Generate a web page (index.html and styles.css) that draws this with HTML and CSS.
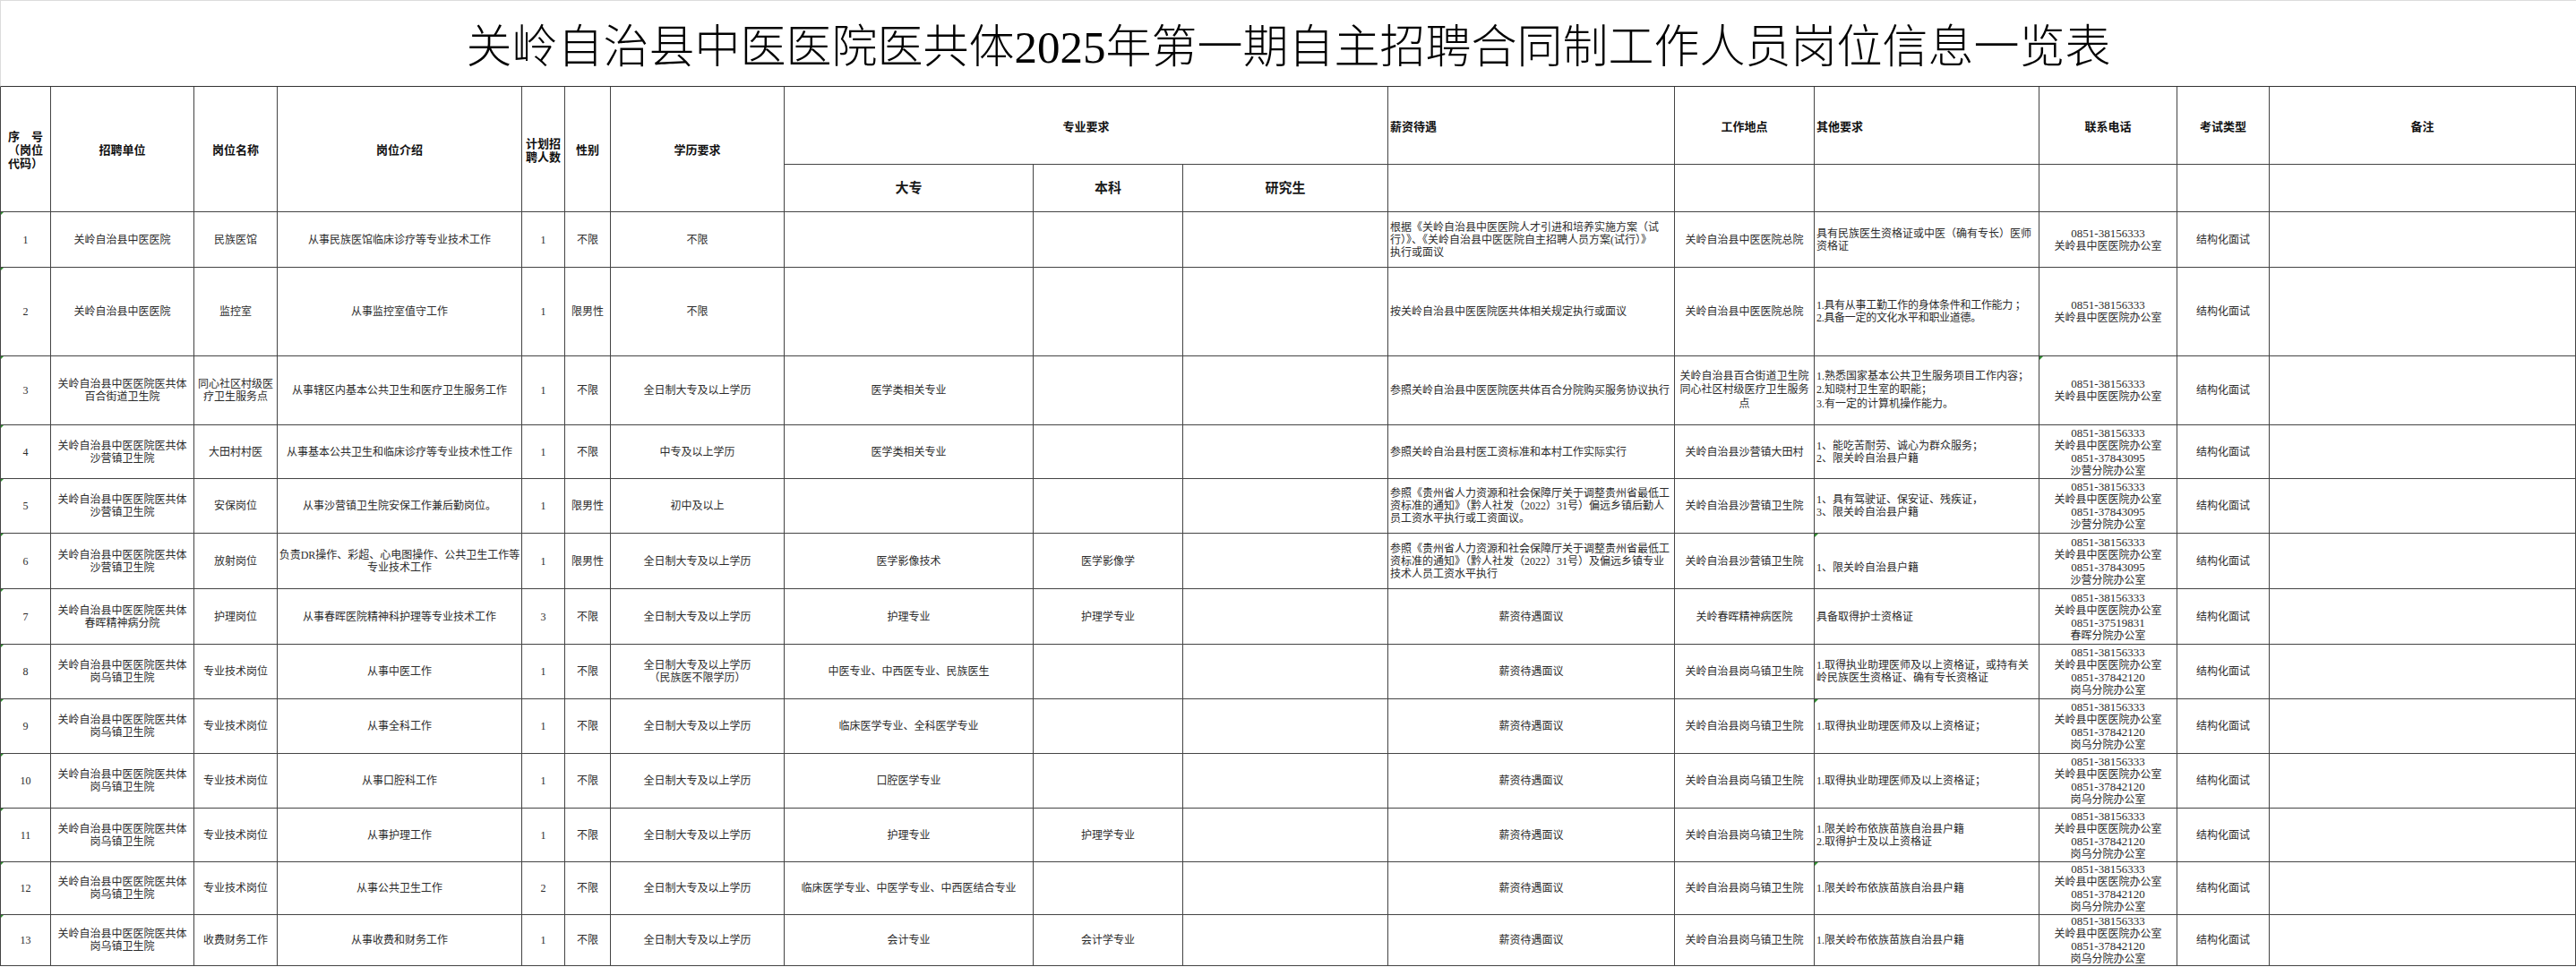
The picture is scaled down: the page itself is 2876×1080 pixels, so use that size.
FILE: index.html
```html
<!DOCTYPE html>
<html lang="zh-CN">
<head>
<meta charset="utf-8">
<title>岗位信息一览表</title>
<link rel="stylesheet" href="styles.css">
</head>
<body>
<div class="sheet">
  <div class="c title"><p>关岭自治县中医医院医共体2025年第一期自主招聘合同制工作人员岗位信息一览表</p></div>

  <div class="c h no r2"><p>序　号<br>（岗位<br>代码）</p></div>
  <div class="c h r2"><p>招聘单位</p></div>
  <div class="c h r2"><p>岗位名称</p></div>
  <div class="c h r2"><p>岗位介绍</p></div>
  <div class="c h r2"><p>计划招<br>聘人数</p></div>
  <div class="c h r2"><p>性别</p></div>
  <div class="c h r2"><p>学历要求</p></div>
  <div class="c h c3"><p>专业要求</p></div>
  <div class="c h l"><p>薪资待遇</p></div>
  <div class="c h"><p>工作地点</p></div>
  <div class="c h l"><p>其他要求</p></div>
  <div class="c h"><p>联系电话</p></div>
  <div class="c h"><p>考试类型</p></div>
  <div class="c h"><p>备注</p></div>
  <div class="c h2"><p>大专</p></div>
  <div class="c h2"><p>本科</p></div>
  <div class="c h2"><p>研究生</p></div>
  <div class="c"></div><div class="c"></div><div class="c"></div><div class="c"></div><div class="c"></div><div class="c"></div>

  <!-- 1 -->
  <div class="c no tri"><p>1</p></div>
  <div class="c"><p>关岭自治县中医医院</p></div>
  <div class="c"><p>民族医馆</p></div>
  <div class="c"><p>从事民族医馆临床诊疗等专业技术工作</p></div>
  <div class="c"><p>1</p></div>
  <div class="c"><p>不限</p></div>
  <div class="c"><p>不限</p></div>
  <div class="c"></div><div class="c"></div><div class="c"></div>
  <div class="c l"><p>根据《关岭自治县中医医院人才引进和培养实施方案（试<br>行）》、《关岭自治县中医医院自主招聘人员方案(试行）》<br>执行或面议</p></div>
  <div class="c"><p>关岭自治县中医医院总院</p></div>
  <div class="c l"><p>具有民族医生资格证或中医（确有专长）医师<br>资格证</p></div>
  <div class="c"><p><span class="num">0851-38156333</span><br>关岭县中医医院办公室</p></div>
  <div class="c"><p>结构化面试</p></div>
  <div class="c"></div>

  <!-- 2 -->
  <div class="c no tri"><p>2</p></div>
  <div class="c"><p>关岭自治县中医医院</p></div>
  <div class="c"><p>监控室</p></div>
  <div class="c"><p>从事监控室值守工作</p></div>
  <div class="c"><p>1</p></div>
  <div class="c"><p>限男性</p></div>
  <div class="c"><p>不限</p></div>
  <div class="c"></div><div class="c"></div><div class="c"></div>
  <div class="c l"><p>按关岭自治县中医医院医共体相关规定执行或面议</p></div>
  <div class="c"><p>关岭自治县中医医院总院</p></div>
  <div class="c l tight"><p>1.具有从事工勤工作的身体条件和工作能力 ；<br>2.具备一定的文化水平和职业道德。</p></div>
  <div class="c"><p><span class="num">0851-38156333</span><br>关岭县中医医院办公室</p></div>
  <div class="c"><p>结构化面试</p></div>
  <div class="c"></div>

  <!-- 3 -->
  <div class="c no tri"><p>3</p></div>
  <div class="c"><p>关岭自治县中医医院医共体<br>百合街道卫生院</p></div>
  <div class="c"><p>同心社区村级医<br>疗卫生服务点</p></div>
  <div class="c"><p>从事辖区内基本公共卫生和医疗卫生服务工作</p></div>
  <div class="c"><p>1</p></div>
  <div class="c"><p>不限</p></div>
  <div class="c"><p>全日制大专及以上学历</p></div>
  <div class="c"><p>医学类相关专业</p></div>
  <div class="c"></div><div class="c"></div>
  <div class="c l"><p>参照关岭自治县中医医院医共体百合分院购买服务协议执行</p></div>
  <div class="c loose"><p>关岭自治县百合街道卫生院<br>同心社区村级医疗卫生服务<br>点</p></div>
  <div class="c l loose"><p>1.熟悉国家基本公共卫生服务项目工作内容；<br>2.知晓村卫生室的职能；<br>3.有一定的计算机操作能力。</p></div>
  <div class="c tri"><p><span class="num">0851-38156333</span><br>关岭县中医医院办公室</p></div>
  <div class="c"><p>结构化面试</p></div>
  <div class="c"></div>

  <!-- 4 -->
  <div class="c no tri"><p>4</p></div>
  <div class="c"><p>关岭自治县中医医院医共体<br>沙营镇卫生院</p></div>
  <div class="c"><p>大田村村医</p></div>
  <div class="c"><p>从事基本公共卫生和临床诊疗等专业技术性工作</p></div>
  <div class="c"><p>1</p></div>
  <div class="c"><p>不限</p></div>
  <div class="c"><p>中专及以上学历</p></div>
  <div class="c"><p>医学类相关专业</p></div>
  <div class="c"></div><div class="c"></div>
  <div class="c l"><p>参照关岭自治县村医工资标准和本村工作实际实行</p></div>
  <div class="c"><p>关岭自治县沙营镇大田村</p></div>
  <div class="c l"><p>1、能吃苦耐劳、诚心为群众服务；<br>2、限关岭自治县户籍</p></div>
  <div class="c"><p><span class="num">0851-38156333</span><br>关岭县中医医院办公室<br><span class="num">0851-37843095</span><br>沙营分院办公室</p></div>
  <div class="c"><p>结构化面试</p></div>
  <div class="c"></div>

  <!-- 5 -->
  <div class="c no tri"><p>5</p></div>
  <div class="c"><p>关岭自治县中医医院医共体<br>沙营镇卫生院</p></div>
  <div class="c"><p>安保岗位</p></div>
  <div class="c"><p>从事沙营镇卫生院安保工作兼后勤岗位。</p></div>
  <div class="c"><p>1</p></div>
  <div class="c"><p>限男性</p></div>
  <div class="c"><p>初中及以上</p></div>
  <div class="c"></div><div class="c"></div><div class="c"></div>
  <div class="c l"><p>参照《贵州省人力资源和社会保障厅关于调整贵州省最低工<br>资标准的通知》（黔人社发（2022）31号）偏远乡镇后勤人<br>员工资水平执行或工资面议。</p></div>
  <div class="c"><p>关岭自治县沙营镇卫生院</p></div>
  <div class="c l"><p>1、具有驾驶证、保安证、残疾证，<br>3、限关岭自治县户籍</p></div>
  <div class="c"><p><span class="num">0851-38156333</span><br>关岭县中医医院办公室<br><span class="num">0851-37843095</span><br>沙营分院办公室</p></div>
  <div class="c"><p>结构化面试</p></div>
  <div class="c"></div>

  <!-- 6 -->
  <div class="c no tri"><p>6</p></div>
  <div class="c"><p>关岭自治县中医医院医共体<br>沙营镇卫生院</p></div>
  <div class="c"><p>放射岗位</p></div>
  <div class="c"><p>负责DR操作、彩超、心电图操作、公共卫生工作等<br>专业技术工作</p></div>
  <div class="c"><p>1</p></div>
  <div class="c"><p>限男性</p></div>
  <div class="c"><p>全日制大专及以上学历</p></div>
  <div class="c"><p>医学影像技术</p></div>
  <div class="c"><p>医学影像学</p></div>
  <div class="c"></div>
  <div class="c l"><p>参照《贵州省人力资源和社会保障厅关于调整贵州省最低工<br>资标准的通知》（黔人社发（2022）31号）及偏远乡镇专业<br>技术人员工资水平执行</p></div>
  <div class="c"><p>关岭自治县沙营镇卫生院</p></div>
  <div class="c l tri low"><p>1、限关岭自治县户籍</p></div>
  <div class="c"><p><span class="num">0851-38156333</span><br>关岭县中医医院办公室<br><span class="num">0851-37843095</span><br>沙营分院办公室</p></div>
  <div class="c"><p>结构化面试</p></div>
  <div class="c"></div>

  <!-- 7 -->
  <div class="c no tri"><p>7</p></div>
  <div class="c"><p>关岭自治县中医医院医共体<br>春晖精神病分院</p></div>
  <div class="c"><p>护理岗位</p></div>
  <div class="c"><p>从事春晖医院精神科护理等专业技术工作</p></div>
  <div class="c"><p>3</p></div>
  <div class="c"><p>不限</p></div>
  <div class="c"><p>全日制大专及以上学历</p></div>
  <div class="c"><p>护理专业</p></div>
  <div class="c"><p>护理学专业</p></div>
  <div class="c"></div>
  <div class="c"><p>薪资待遇面议</p></div>
  <div class="c"><p>关岭春晖精神病医院</p></div>
  <div class="c l"><p>具备取得护士资格证</p></div>
  <div class="c"><p><span class="num">0851-38156333</span><br>关岭县中医医院办公室<br><span class="num">0851-37519831</span><br>春晖分院办公室</p></div>
  <div class="c"><p>结构化面试</p></div>
  <div class="c"></div>

  <!-- 8 -->
  <div class="c no tri"><p>8</p></div>
  <div class="c"><p>关岭自治县中医医院医共体<br>岗乌镇卫生院</p></div>
  <div class="c"><p>专业技术岗位</p></div>
  <div class="c"><p>从事中医工作</p></div>
  <div class="c"><p>1</p></div>
  <div class="c"><p>不限</p></div>
  <div class="c"><p>全日制大专及以上学历<br>（民族医不限学历）</p></div>
  <div class="c"><p>中医专业、中西医专业、民族医生</p></div>
  <div class="c"></div><div class="c"></div>
  <div class="c"><p>薪资待遇面议</p></div>
  <div class="c"><p>关岭自治县岗乌镇卫生院</p></div>
  <div class="c l"><p>1.取得执业助理医师及以上资格证，或持有关<br>岭民族医生资格证、确有专长资格证</p></div>
  <div class="c"><p><span class="num">0851-38156333</span><br>关岭县中医医院办公室<br><span class="num">0851-37842120</span><br>岗乌分院办公室</p></div>
  <div class="c"><p>结构化面试</p></div>
  <div class="c"></div>

  <!-- 9 -->
  <div class="c no tri"><p>9</p></div>
  <div class="c"><p>关岭自治县中医医院医共体<br>岗乌镇卫生院</p></div>
  <div class="c"><p>专业技术岗位</p></div>
  <div class="c"><p>从事全科工作</p></div>
  <div class="c"><p>1</p></div>
  <div class="c"><p>不限</p></div>
  <div class="c"><p>全日制大专及以上学历</p></div>
  <div class="c"><p>临床医学专业、全科医学专业</p></div>
  <div class="c"></div><div class="c"></div>
  <div class="c"><p>薪资待遇面议</p></div>
  <div class="c"><p>关岭自治县岗乌镇卫生院</p></div>
  <div class="c l tri"><p>1.取得执业助理医师及以上资格证；</p></div>
  <div class="c"><p><span class="num">0851-38156333</span><br>关岭县中医医院办公室<br><span class="num">0851-37842120</span><br>岗乌分院办公室</p></div>
  <div class="c"><p>结构化面试</p></div>
  <div class="c"></div>

  <!-- 10 -->
  <div class="c no tri"><p>10</p></div>
  <div class="c"><p>关岭自治县中医医院医共体<br>岗乌镇卫生院</p></div>
  <div class="c"><p>专业技术岗位</p></div>
  <div class="c"><p>从事口腔科工作</p></div>
  <div class="c"><p>1</p></div>
  <div class="c"><p>不限</p></div>
  <div class="c"><p>全日制大专及以上学历</p></div>
  <div class="c"><p>口腔医学专业</p></div>
  <div class="c"></div><div class="c"></div>
  <div class="c"><p>薪资待遇面议</p></div>
  <div class="c"><p>关岭自治县岗乌镇卫生院</p></div>
  <div class="c l"><p>1.取得执业助理医师及以上资格证；</p></div>
  <div class="c"><p><span class="num">0851-38156333</span><br>关岭县中医医院办公室<br><span class="num">0851-37842120</span><br>岗乌分院办公室</p></div>
  <div class="c"><p>结构化面试</p></div>
  <div class="c"></div>

  <!-- 11 -->
  <div class="c no tri"><p>11</p></div>
  <div class="c"><p>关岭自治县中医医院医共体<br>岗乌镇卫生院</p></div>
  <div class="c"><p>专业技术岗位</p></div>
  <div class="c"><p>从事护理工作</p></div>
  <div class="c"><p>1</p></div>
  <div class="c"><p>不限</p></div>
  <div class="c"><p>全日制大专及以上学历</p></div>
  <div class="c"><p>护理专业</p></div>
  <div class="c"><p>护理学专业</p></div>
  <div class="c"></div>
  <div class="c"><p>薪资待遇面议</p></div>
  <div class="c"><p>关岭自治县岗乌镇卫生院</p></div>
  <div class="c l"><p>1.限关岭布依族苗族自治县户籍<br>2.取得护士及以上资格证</p></div>
  <div class="c"><p><span class="num">0851-38156333</span><br>关岭县中医医院办公室<br><span class="num">0851-37842120</span><br>岗乌分院办公室</p></div>
  <div class="c"><p>结构化面试</p></div>
  <div class="c"></div>

  <!-- 12 -->
  <div class="c no tri"><p>12</p></div>
  <div class="c"><p>关岭自治县中医医院医共体<br>岗乌镇卫生院</p></div>
  <div class="c"><p>专业技术岗位</p></div>
  <div class="c"><p>从事公共卫生工作</p></div>
  <div class="c"><p>2</p></div>
  <div class="c"><p>不限</p></div>
  <div class="c"><p>全日制大专及以上学历</p></div>
  <div class="c"><p>临床医学专业、中医学专业、中西医结合专业</p></div>
  <div class="c"></div><div class="c"></div>
  <div class="c"><p>薪资待遇面议</p></div>
  <div class="c"><p>关岭自治县岗乌镇卫生院</p></div>
  <div class="c l tri"><p>1.限关岭布依族苗族自治县户籍</p></div>
  <div class="c"><p><span class="num">0851-38156333</span><br>关岭县中医医院办公室<br><span class="num">0851-37842120</span><br>岗乌分院办公室</p></div>
  <div class="c"><p>结构化面试</p></div>
  <div class="c"></div>

  <!-- 13 -->
  <div class="c no tri"><p>13</p></div>
  <div class="c"><p>关岭自治县中医医院医共体<br>岗乌镇卫生院</p></div>
  <div class="c"><p>收费财务工作</p></div>
  <div class="c"><p>从事收费和财务工作</p></div>
  <div class="c"><p>1</p></div>
  <div class="c"><p>不限</p></div>
  <div class="c"><p>全日制大专及以上学历</p></div>
  <div class="c"><p>会计专业</p></div>
  <div class="c"><p>会计学专业</p></div>
  <div class="c"></div>
  <div class="c"><p>薪资待遇面议</p></div>
  <div class="c"><p>关岭自治县岗乌镇卫生院</p></div>
  <div class="c l"><p>1.限关岭布依族苗族自治县户籍</p></div>
  <div class="c"><p><span class="num">0851-38156333</span><br>关岭县中医医院办公室<br><span class="num">0851-37842120</span><br>岗乌分院办公室</p></div>
  <div class="c"><p>结构化面试</p></div>
  <div class="c"></div>
</div>
</body>
</html>
```

FILE: styles.css
```css
html, body {
  margin: 0;
  padding: 0;
  background: #ffffff;
}

.sheet {
  display: grid;
  width: 2876px;
  grid-template-columns: 57px 160px 93px 273px 48px 51px 194px 278px 167px 229px 320px 156px 251px 154px 103px 342px;
  grid-template-rows: 97px 87px 53px 62px 99px 77px 60px 61px 62px 62px 61px 61px 61px 60px 59px 57px;
  font-family: "Liberation Serif", "Noto Sans CJK SC", serif;
  font-size: 12px;
  line-height: 14px;
  color: #2b2b2b;
}

.c {
  box-sizing: border-box;
  position: relative;
  display: flex;
  align-items: center;
  justify-content: center;
  text-align: center;
  border-right: 1px solid #444444;
  border-bottom: 1px solid #444444;
  overflow: hidden;
  white-space: nowrap;
}

.c p {
  margin: 0;
}

.no {
  border-left: 1px solid #444444;
}

.title {
  grid-column: 1 / -1;
  border-top: 1px solid #dcdcdc;
  border-left: 1px solid #dcdcdc;
  border-right: none;
  border-bottom: 1px solid #333333;
  padding-top: 8px;
  font-family: "Liberation Serif", "Noto Sans CJK SC", serif;
  font-size: 51px;
  line-height: 60px;
  font-weight: 300;
  color: #000000;
}

.h {
  font-family: "Noto Sans CJK SC", sans-serif;
  font-weight: bold;
  font-size: 13px;
  line-height: 15px;
  color: #111111;
}

.r2 {
  grid-row: span 2;
}

.c3 {
  grid-column: span 3;
}

.h2 {
  font-family: "Liberation Serif", "Noto Sans CJK SC", serif;
  font-weight: bold;
  font-size: 15px;
  color: #1a1a1a;
}

.l {
  justify-content: flex-start;
  text-align: left;
  padding-left: 2px;
}

.tight {
  letter-spacing: -0.3px;
}

.loose {
  line-height: 15.5px;
}

.low p {
  padding-top: 14px;
}

.num {
  font-size: 13px;
}

.tri::before {
  content: "";
  position: absolute;
  top: 0;
  left: 0;
  border-top: 4px solid #2f8f2f;
  border-right: 4px solid transparent;
}

.no.tri::before {
  left: -1px;
}
```
